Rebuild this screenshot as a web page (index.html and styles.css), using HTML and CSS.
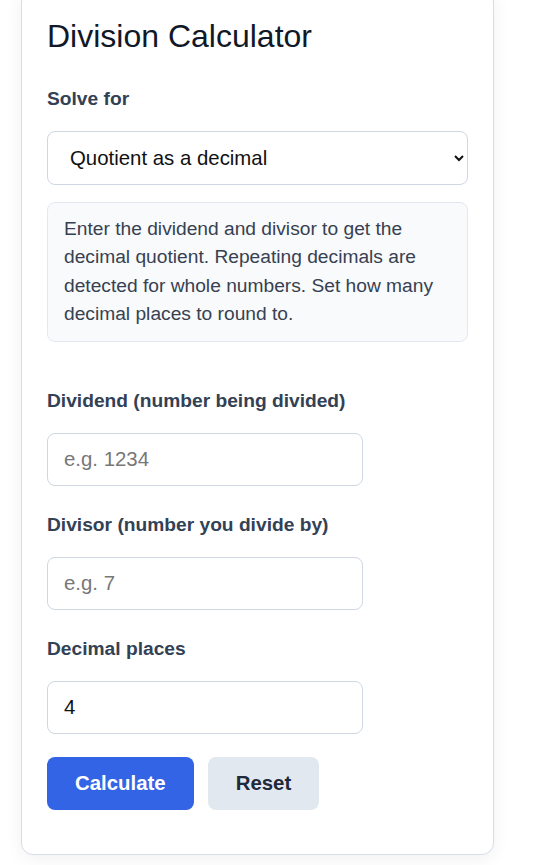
FILE: index.html
```html
<!DOCTYPE html>
<html lang="en">
  <head>
    <meta charset="UTF-8" />
    <meta name="viewport" content="width=device-width, initial-scale=1.0" />
    <title>Division Calculator</title>
    <link rel="stylesheet" href="styles.css">
  </head>
  <body>
    <div class="card">
      <h1 class="title">Division Calculator</h1>

      <div class="field solve">
        <label for="mode">Solve for</label>
        <select id="mode" class="select">
          <option>Quotient as a decimal</option>
          <option>Quotient and remainder</option>
          <option>Quotient as a fraction</option>
        </select>
      </div>

      <p class="hint">
        Enter the dividend and divisor to get the decimal quotient. Repeating
        decimals are detected for whole numbers. Set how many decimal places to
        round to.
      </p>

      <div class="field">
        <label for="dividend">Dividend (number being divided)</label>
        <input id="dividend" class="input" type="text" placeholder="e.g. 1234" />
      </div>

      <div class="field">
        <label for="divisor">Divisor (number you divide by)</label>
        <input id="divisor" class="input" type="text" placeholder="e.g. 7" />
      </div>

      <div class="field last">
        <label for="places">Decimal places</label>
        <input id="places" class="input" type="text" value="4" />
      </div>

      <div class="actions">
        <button class="btn btn-primary" id="calc">Calculate</button>
        <button class="btn btn-light" id="reset">Reset</button>
      </div>
    </div>
    <script>
      // reset puts the fields back
      var reset = document.querySelector("#reset");
      reset.addEventListener("click", function () {
        document.querySelector("#dividend").value = "";
        document.querySelector("#divisor").value = "";
        document.querySelector("#places").value = "4";
      });
    </script>
  </body>
</html>
```

FILE: styles.css
```css
* {
  margin: 0;
  padding: 0;
  box-sizing: border-box;
}
body {
  background-color: #fff;
  font-family: "Liberation Sans", Arial, sans-serif;
  color: #111827;
}
.card {
  width: 473px;
  margin: -10px 0 10px 21px;
  padding: 27px 25px 44px;
  background: #fff;
  border: 1px solid #d6dde8;
  border-radius: 12px;
  box-shadow: 0 4px 18px rgba(15, 23, 42, 0.06);
}
.title {
  font-size: 32px;
  line-height: 37px;
  font-weight: normal;
  color: #111827;
  margin-bottom: 32px;
}
.field {
  margin-bottom: 27px;
}
.field label {
  display: block;
  font-size: 19.2px;
  line-height: 23px;
  font-weight: bold;
  color: #334155;
  margin-bottom: 21px;
}
.field.solve {
  margin-bottom: 17px;
}
.field.last {
  margin-bottom: 23px;
}
.select {
  width: 100%;
  height: 54px;
  padding: 0 14px 0 18px;
  font-family: inherit;
  font-size: 20.4px;
  color: #111;
  background: #fff;
  border: 1px solid #cfd7e3;
  border-radius: 8px;
}
.hint {
  background: #f8fafc;
  border: 1px solid #e2e8f0;
  border-radius: 8px;
  padding: 12px 16px 13px;
  font-size: 19.2px;
  line-height: 28.3px;
  color: #374151;
  margin-bottom: 47px;
}
.input {
  display: block;
  width: 75%;
  height: 53px;
  padding: 0 16px;
  font-family: inherit;
  font-size: 20.4px;
  color: #111;
  border: 1px solid #cfd7e3;
  border-radius: 8px;
  outline: none;
}
.input::placeholder {
  color: #777;
}
.actions {
  display: flex;
  gap: 14px;
}
.btn {
  height: 53px;
  padding: 0 28px;
  border: none;
  border-radius: 8px;
  font-family: inherit;
  font-size: 20.4px;
  font-weight: bold;
  cursor: pointer;
}
.btn-primary {
  background: #3464e6;
  color: #fff;
}
.btn-light {
  background: #e2e8f0;
  color: #1e293b;
}
```
